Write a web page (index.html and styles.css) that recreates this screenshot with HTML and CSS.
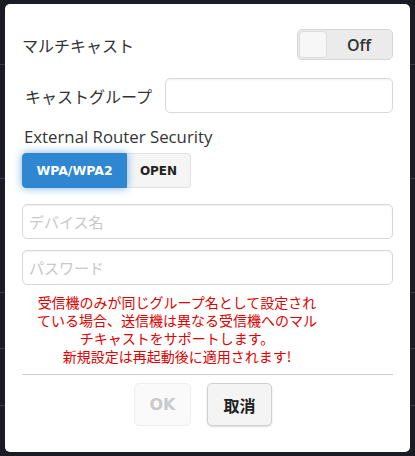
FILE: index.html
```html
<!DOCTYPE html>
<html lang="ja">
<head>
<meta charset="utf-8">
<link rel="stylesheet" href="styles.css">
</head>
<body>
<div class="backdrop">
  <div class="bg-line l1"></div>
  <div class="bg-line l2"></div>
  <div class="bg-line l3"></div>
  <div class="bg-line l4"></div>
  <div class="bg-line l5"></div>
  <div class="modal">
    <div class="row row-toggle">
      <span class="label">マルチキャスト</span>
      <div class="toggle"><span class="knob"></span><span class="toggle-text">Off</span></div>
    </div>
    <div class="row row-group">
      <span class="label">キャストグループ</span>
      <input class="field field-group" type="text">
    </div>
    <div class="section-title">External Router Security</div>
    <div class="seg">
      <button class="seg-btn active">WPA/WPA2</button>
      <button class="seg-btn">OPEN</button>
    </div>
    <input class="field field-full" type="text" placeholder="デバイス名">
    <input class="field field-full" type="text" placeholder="パスワード">
    <div class="note">受信機のみが同じグループ名として設定されている場合、送信機は異なる受信機へのマルチキャストをサポートします。<br>新規設定は再起動後に適用されます!</div>
    <div class="divider"></div>
    <div class="actions">
      <button class="btn btn-ok" disabled>OK</button>
      <button class="btn btn-cancel">取消</button>
    </div>
  </div>
</div>
</body>
</html>
```
FILE: styles.css
```css
* { box-sizing: border-box; }
html, body { margin: 0; padding: 0; }
body {
  width: 415px;
  height: 456px;
  overflow: hidden;
  background: #1b1b24;
  font-family: "Noto Sans CJK JP", "Open Sans", sans-serif;
}
.backdrop {
  position: relative;
  width: 415px;
  height: 456px;
  padding: 4px 5px 4px 5px;
}
.bg-line {
  position: absolute;
  left: 0;
  width: 415px;
  height: 1px;
  background: #3a3a44;
}
.l1 { top: 64px; }
.l2 { top: 178px; }
.l3 { top: 292px; }
.l4 { top: 348px; }
.l5 { top: 405px; }
.modal {
  position: relative;
  background: #fff;
  border-radius: 5px;
  height: 448px;
  padding: 25px 17px 0 17px;
}
.row {
  display: flex;
  align-items: center;
  justify-content: space-between;
}
.label {
  font-size: 16px;
  color: #333;
}
.row-toggle { height: 31px; }
.toggle {
  width: 96px;
  height: 31px;
  border: 1px solid #d6d6d6;
  border-radius: 5px;
  background: #ebebeb;
  display: flex;
  align-items: center;
  padding: 1px;
}
.knob {
  width: 28px;
  height: 27px;
  background: #f7f7f7;
  border: 1px solid #ddd;
  border-radius: 4px;
}
.toggle-text {
  flex: 1;
  text-align: center;
  font-family: "Open Sans", sans-serif;
  font-weight: 600;
  font-size: 16px;
  color: #333;
}
.row-group {
  margin-top: 18px;
  padding-left: 3px;
}
.field {
  display: block;
  height: 35px;
  border: 1px solid #d9d9d9;
  border-radius: 5px;
  background: #fff;
  box-shadow: inset 0 1px 2px rgba(0,0,0,0.06);
  font-family: "Noto Sans CJK JP", sans-serif;
  font-size: 15px;
  padding: 0 6px;
  outline: none;
}
.field::placeholder { color: #c8c8c8; }
.field-group { width: 228px; }
.field-full { width: 371px; margin-top: 16px; }
.field-full + .field-full { margin-top: 11px; }
.section-title {
  margin-top: 13px;
  padding-left: 2px;
  font-family: "Open Sans", sans-serif;
  font-size: 16.8px;
  color: #333;
  line-height: 21px;
}
.seg {
  display: flex;
  margin-top: 6px;
}
.seg-btn {
  height: 35px;
  border: 1px solid #e2e2e2;
  background: #f5f5f5;
  font-family: "DejaVu Sans", sans-serif;
  font-weight: bold;
  font-size: 12.5px;
  color: #222;
  padding: 0;
}
.seg-btn.active {
  width: 105px;
  background: #2f86d1;
  border-color: #2f86d1;
  color: #fff;
  border-radius: 4px 0 0 4px;
  box-shadow: 0 0 9px rgba(47,134,209,0.65);
  position: relative;
  z-index: 1;
}
.seg-btn:not(.active) {
  width: 64px;
  border-left: none;
  border-radius: 0 4px 4px 0;
  font-size: 12px;
}
.note {
  width: 292px;
  margin: 8px 0 0 9px;
  color: #e00000;
  font-size: 14px;
  line-height: 18px;
  text-align: center;
}
.divider {
  margin-top: 9px;
  height: 1px;
  background: #cfcfcf;
}
.actions {
  display: flex;
  justify-content: center;
  gap: 16px;
  margin-top: 8px;
  padding-right: 9px;
}
.btn {
  height: 43px;
  border-radius: 5px;
  font-family: "Noto Sans CJK JP", sans-serif;
  font-weight: bold;
  font-size: 16px;
  padding: 0;
}
.btn-ok {
  width: 57px;
  background: #fafafa;
  border: 1px solid #efefef;
  color: #cacaca;
  font-family: "DejaVu Sans", sans-serif;
}
.btn-cancel {
  width: 65px;
  background: #f4f4f4;
  border: 1px solid #d0d0d0;
  color: #222;
  box-shadow: 0 1px 2px rgba(0,0,0,0.15);
}
```
